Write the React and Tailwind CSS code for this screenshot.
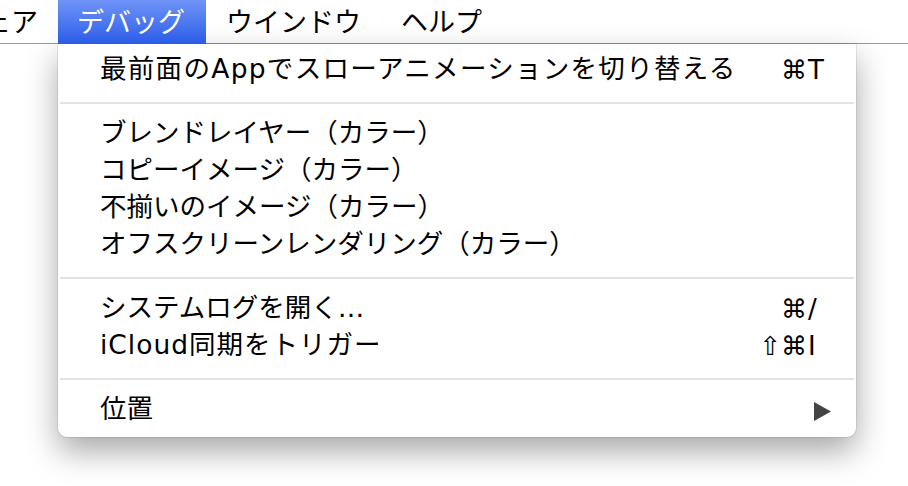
import { Fragment } from 'react'

const font = { fontFamily: '"Noto Sans CJK JP", "DejaVu Sans", sans-serif' }
const menuFont = { fontFamily: '"DejaVu Sans", "Noto Sans CJK JP", sans-serif' }

const groups = [
  [{ label: '最前面のAppでスローアニメーションを切り替える', mod: '⌘', key: 'T', track: 'tracking-[1.3px]' }],
  [
    { label: 'ブレンドレイヤー（カラー）' },
    { label: 'コピーイメージ（カラー）' },
    { label: '不揃いのイメージ（カラー）' },
    { label: 'オフスクリーンレンダリング（カラー）' },
  ],
  [
    { label: 'システムログを開く…', mod: '⌘', key: '/' },
    { label: 'iCloud同期をトリガー', mod: '⇧⌘', key: 'I', track: 'tracking-[1px]' },
  ],
  [{ label: '位置', submenu: true }],
]

function MenuRow({ item }) {
  return (
    <div className="h-[37px] flex items-center pl-[42px] pr-[26px] pb-[4px] text-[26.5px] text-black leading-none">
      <span className={`flex-1 whitespace-nowrap ${item.track || ''}`}>{item.label}</span>
      {item.mod && (
        <span className="flex items-center text-[26px]">
          <span className="w-[60px] text-right">{item.mod}</span>
          <span className="w-[23px] pl-[1px]">{item.key}</span>
        </span>
      )}
      {item.submenu && (
        <svg width="17" height="19" viewBox="0 0 17 19" className="mt-[4px] mr-[-1px]">
          <path d="M0 0 L17 9.5 L0 19 Z" fill="#444" />
        </svg>
      )}
    </div>
  )
}

export default function App() {
  const bar = ['ウインドウ', 'ヘルプ']

  return (
    <div className="w-[908px] h-[486px] bg-white overflow-hidden" style={font}>
      {/* Menu bar */}
      <div className="h-[44px] flex items-stretch bg-white border-b border-[#9a9a9a] text-[27px] text-black leading-none whitespace-nowrap">
        <div className="flex items-center ml-[-124px] w-[162px] justify-end pb-[3px]">ハードウェア</div>
        <div className="flex items-center ml-[20px] px-[19px] pb-[3px] w-[148px] -mb-px bg-gradient-to-b from-[#7093f7] to-[#2a5be8] text-white">
          デバッグ
        </div>
        {bar.map(t => (
          <div key={t} className="flex items-center px-[20px] pb-[3px]">{t}</div>
        ))}
      </div>

      {/* Debug menu */}
      <div
        className="ml-[58px] w-[798px] bg-white rounded-b-[9px] pt-[9px] pb-[7px] shadow-[0_0_0_1px_rgba(0,0,0,0.08),0_14px_32px_rgba(0,0,0,0.35)]"
        style={menuFont}
      >
        {groups.map((g, i) => (
          <Fragment key={i}>
            {i > 0 && <div className="mt-[12px] mb-[13px] h-[2px] mx-[2px] bg-[#e3e3e3]" />}
            {g.map(item => <MenuRow key={item.label} item={item} />)}
          </Fragment>
        ))}
      </div>
    </div>
  )
}
